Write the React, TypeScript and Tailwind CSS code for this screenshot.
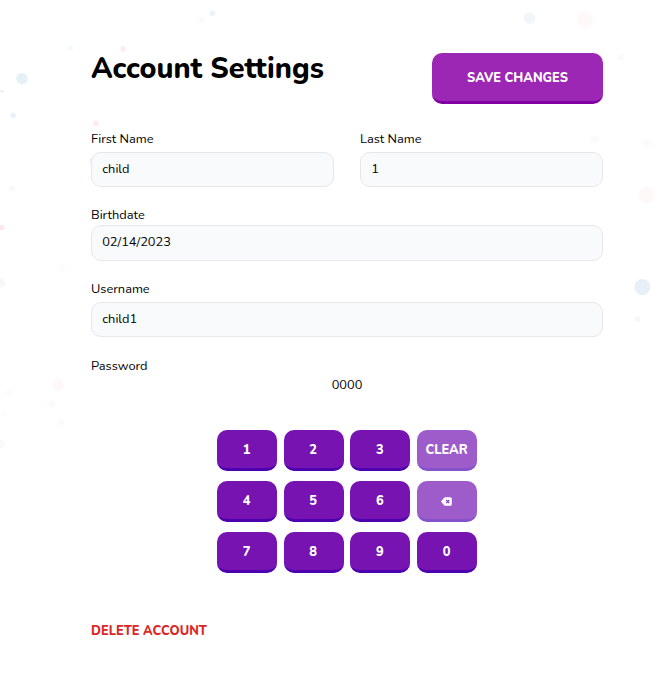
import React from "react";

type Dot = { x: number; y: number; r: number; color: string };

const dots: Dot[] = [
  { x: 212.3, y: 13.3, r: 2.8, color: "#e9f3f9" },
  { x: 201.5, y: 19.5, r: 2.5, color: "#fef7f8" },
  { x: 123, y: 49, r: 2.8, color: "#feeaef" },
  { x: 70.5, y: 48, r: 2.5, color: "#f3fafb" },
  { x: 22, y: 78.7, r: 5.8, color: "#e5f1f7" },
  { x: 2, y: 91.3, r: 1.5, color: "#f0eced" },
  { x: 13, y: 115.3, r: 2.8, color: "#e6f2f9" },
  { x: 96, y: 123.3, r: 2.8, color: "#feeaef" },
  { x: 93, y: 161, r: 3.5, color: "#fdeaef" },
  { x: 11.7, y: 188.5, r: 2.8, color: "#f6fafc" },
  { x: 1.5, y: 227.5, r: 2.8, color: "#fde6ec" },
  { x: 62.5, y: 267, r: 2.8, color: "#fef9fa" },
  { x: 0.5, y: 283, r: 4.5, color: "#f5f8fb" },
  { x: 58, y: 384.7, r: 5.8, color: "#fef8f9" },
  { x: 8.5, y: 392.7, r: 2.8, color: "#fefafb" },
  { x: 52, y: 404, r: 3.2, color: "#f8fafd" },
  { x: 43.3, y: 403.3, r: 1.5, color: "#fbfcfe" },
  { x: 3.5, y: 413.5, r: 2.3, color: "#fefbfc" },
  { x: 61.3, y: 422.5, r: 3, color: "#fefafb" },
  { x: -1, y: 444, r: 5.2, color: "#f8fafd" },
  { x: 529.5, y: 18, r: 5.8, color: "#f2f6fa" },
  { x: 585, y: 20, r: 8, color: "#fef8f9" },
  { x: 621, y: 57, r: 4, color: "#fefafb" },
  { x: 594.5, y: 139, r: 3.8, color: "#fefafb" },
  { x: 647, y: 143, r: 4, color: "#fefafb" },
  { x: 646.5, y: 195, r: 8, color: "#fef8f9" },
  { x: 642.3, y: 287, r: 8, color: "#e7f0f7" },
  { x: 637.5, y: 319, r: 2.8, color: "#f6f6fb" },
];

function Field({ label, value, className = "", inputClassName }: { label: string; value: string; className?: string; inputClassName: string }) {
  return (
    <label className={`block text-[12.8px] leading-5 text-black ${className}`}>
      <span className="block">{label}</span>
      <input
        className={`block w-full rounded-[10px] border border-gray-200 bg-gray-50 px-[10.2px] pb-0.5 text-[12.8px] leading-5 text-black outline-none ${inputClassName}`}
        defaultValue={value}
      />
    </label>
  );
}

function Backspace() {
  return (
    <svg width="11" height="9" viewBox="0 0 11 9" aria-label="Backspace">
      <path d="M4.2 0.2H9.2a1.5 1.5 0 0 1 1.6 1.5v5.6a1.5 1.5 0 0 1-1.6 1.5H4.2a1.5 1.5 0 0 1-1.1-.5L.3 5a.8.8 0 0 1 0-1L3.1.7a1.5 1.5 0 0 1 1.1-.5Z" fill="white" />
      <path d="m5.2 3 3 3m0-3-3 3" stroke="#8b3dc0" strokeWidth="1.1" />
    </svg>
  );
}

const keys = ["1", "2", "3", "CLEAR", "4", "5", "6", "back", "7", "8", "9", "0"];

export default function App() {
  return (
    <div className="relative min-h-[682px] overflow-hidden bg-white font-['Nunito','Nunito_Sans',sans-serif]">
      <svg className="absolute inset-0" width="661" height="682" aria-hidden="true">
        {dots.map((d) => (
          <circle key={`${d.x}-${d.y}`} cx={d.x} cy={d.y} r={d.r} fill={d.color} />
        ))}
      </svg>
      <main className="relative ml-[91px] w-[512px] pt-[53px]">
        <header className="flex items-start justify-between">
          <h1 className="text-[28.8px] leading-8 font-extrabold text-black">Account Settings</h1>
          <button className="h-[51px] w-[171px] rounded-[10px] border-b-[3px] border-[#8000a0] bg-[#9c27b5] pt-[3px] text-[12.8px] font-extrabold text-white">
            SAVE CHANGES
          </button>
        </header>
        <div className="mt-[25px] grid grid-cols-2 gap-[26px]">
          <Field label="First Name" value="child" inputClassName="mt-[3px] h-[35px]" />
          <Field label="Last Name" value="1" inputClassName="mt-[3px] h-[35px]" />
        </div>
        <Field label="Birthdate" value="02/14/2023" className="mt-[18px]" inputClassName="h-9" />
        <Field label="Username" value="child1" className="mt-[18px]" inputClassName="mt-[3px] h-[35px]" />
        <section className="mt-[19px] text-[12.8px] text-black">
          <div className="leading-5">Password</div>
          <div className="text-center leading-[18px]">0000</div>
          <div className="mt-9 ml-[126px] grid w-[260px] grid-cols-4 gap-x-[6.66px] gap-y-2.5">
            {keys.map((k) => (
              <button
                key={k}
                className={`flex h-[41px] items-center justify-center rounded-[10px] border-b-[3px] pt-[3px] pr-px text-[12.8px] font-extrabold text-white ${
                  k === "CLEAR" || k === "back" ? "border-[#8652c9] bg-[#9d5cc9]" : "border-[#4c00ae] bg-[#7613b1]"
                }`}
              >
                {k === "back" ? <Backspace /> : k}
              </button>
            ))}
          </div>
        </section>
        <button className="mt-12 block text-[12.8px] leading-5 font-extrabold text-[#dc2626]">DELETE ACCOUNT</button>
      </main>
    </div>
  );
}
